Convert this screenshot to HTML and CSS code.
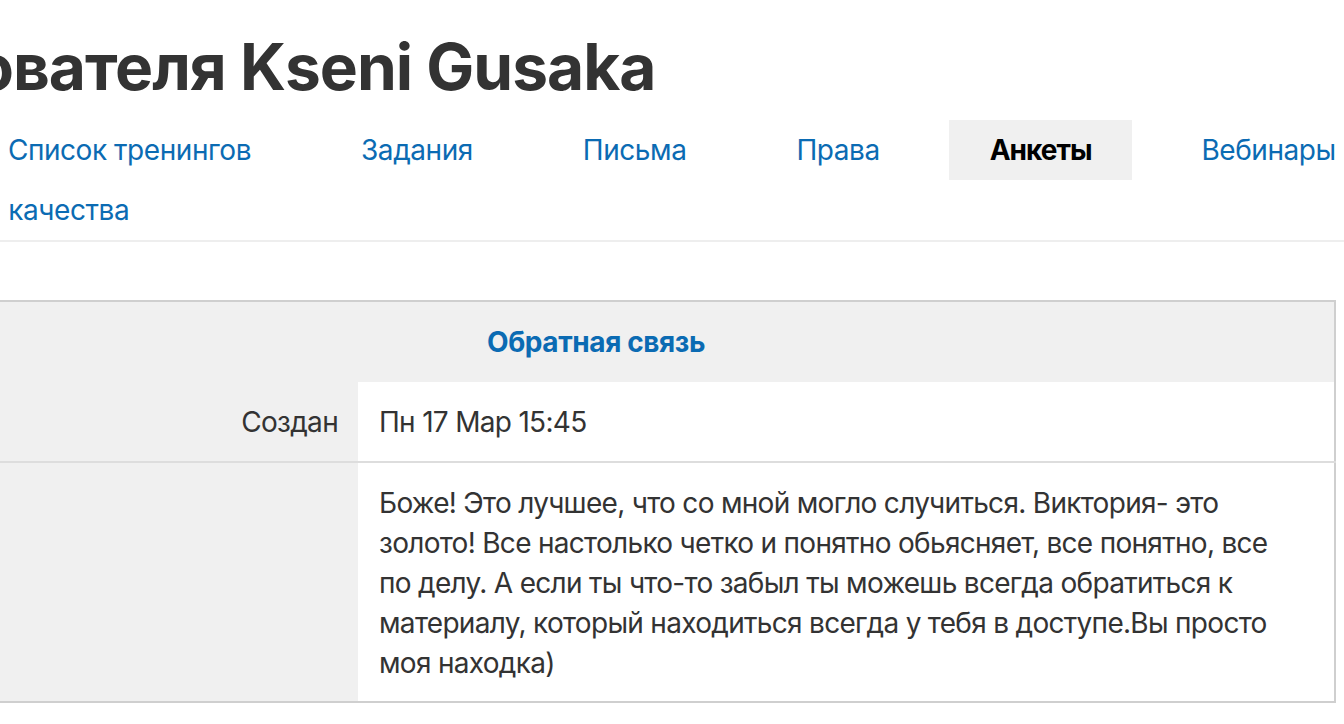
FILE: index.html
```html
<!DOCTYPE html>
<html lang="ru">
<head>
<meta charset="utf-8">
<title>Анкеты пользователя Kseni Gusaka</title>
<link rel="stylesheet" href="styles.css">
</head>
<body>
<div class="page">
  <h1 class="title">Анкеты пользователя Kseni Gusaka</h1>
  <nav class="tabs">
    <a class="tab" href="#">Обучение</a>
    <a class="tab" href="#">Список тренингов</a>
    <a class="tab" href="#">Задания</a>
    <a class="tab" href="#">Письма</a>
    <a class="tab" href="#">Права</a>
    <a class="tab active" href="#">Анкеты</a>
    <a class="tab" href="#">Вебинары</a>
    <a class="tab" href="#">Служба контроля качества</a>
  </nav>
  <table class="survey">
    <thead>
      <tr><th colspan="2" class="survey-head"><a href="#">Обратная связь</a></th></tr>
    </thead>
    <tbody>
      <tr class="row">
        <td class="label">Создан</td>
        <td class="value">Пн 17 Мар 15:45</td>
      </tr>
      <tr class="row">
        <td class="label"></td>
        <td class="value">Боже! Это лучшее, что со мной могло случиться. Виктория- это золото! Все настолько четко и понятно обьясняет, все понятно, все по делу. А если ты что-то забыл ты можешь всегда обратиться к материалу, который находиться всегда у тебя в доступе.Вы просто моя находка)</td>
      </tr>
    </tbody>
  </table>
</div>
</body>
</html>
```
FILE: styles.css
```css
html, body {
  margin: 0;
  padding: 0;
  background: #fff;
  overflow: hidden;
}

body {
  font-family: Inter, "Noto Sans", sans-serif;
  color: #333;
  width: 1344px;
  height: 724px;
}

.page {
  margin-left: -144px;
  width: 1480px;
}

.title {
  margin: 0 0 0 -319px;
  padding-top: 13px;
  height: 107px;
  line-height: 107px;
  font-size: 64px;
  font-weight: 700;
  letter-spacing: -1px;
  color: #333;
  white-space: nowrap;
}

.tabs {
  display: flex;
  flex-wrap: wrap;
  column-gap: 28px;
  margin-left: -131px;
  width: 1680px;
  border-bottom: 2px solid #eeeeee;
}

.tab {
  display: block;
  padding: 0 41px;
  height: 60px;
  line-height: 60px;
  font-size: 28px;
  letter-spacing: -0.45px;
  color: #0b6bb3;
  text-decoration: none;
  white-space: nowrap;
}

.tab.active {
  background: #f0f0f0;
  color: #000;
  font-weight: 700;
  letter-spacing: -1px;
}

.survey {
  margin-top: 58px;
  width: 1480px;
  border-collapse: collapse;
  border: 2px solid #cfcfcf;
  font-size: 28px;
  letter-spacing: -0.7px;
}

.survey-head {
  background: #f0f0f0;
  height: 80px;
  padding: 0;
  text-align: center;
  font-weight: 700;
  letter-spacing: -0.4px;
}

.survey-head a {
  color: #0b6bb3;
  text-decoration: none;
}

.row {
  border-top: 2px solid #dddddd;
}

.row:first-child {
  border-top: 0;
}

.label {
  width: 460px;
  background: #f0f0f0;
  text-align: right;
  vertical-align: middle;
  padding: 0 20px;
  color: #333;
}

.value {
  background: #fff;
  padding: 20px 44px 18px 21px;
  line-height: 40px;
  color: #333;
  vertical-align: top;
}

.row:first-child .value {
  height: 80px;
  box-sizing: border-box;
  vertical-align: middle;
  padding-top: 0;
  padding-bottom: 0;
}
```
